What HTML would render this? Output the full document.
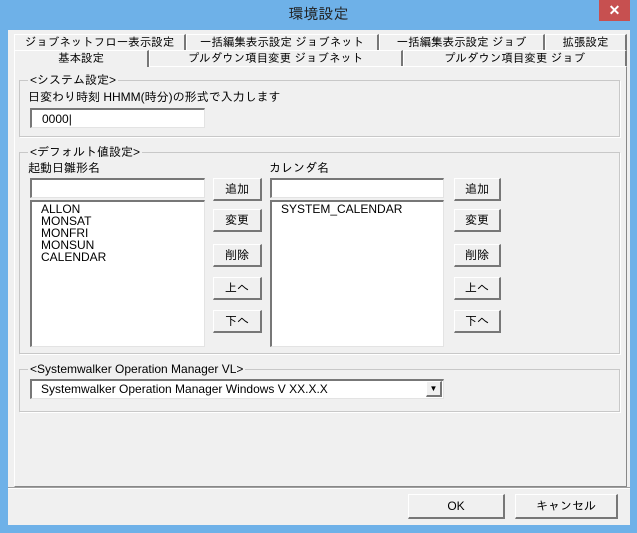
<!DOCTYPE html>
<html><head><meta charset="utf-8"><style>
*{margin:0;padding:0;box-sizing:border-box}
body{width:637px;height:533px;background:#6eb1e8;position:relative;overflow:hidden;font-family:"Liberation Sans","IPAGothic","Noto Sans CJK JP",sans-serif;font-size:12px;color:#000}
.a{position:absolute}
.client{left:8px;top:30px;width:622px;height:495px;background:#f0f0f0}
.title{left:0;top:6px;width:637px;text-align:center;font-size:15px;color:#222}
.close{left:599px;top:0;width:31px;height:21px;background:#c75050;color:#fff;text-align:center;font-size:14px;line-height:20px;font-weight:bold}
.tab{position:absolute;height:16px;line-height:16px;text-align:center;white-space:nowrap;border-right:2px solid #777;border-top:1px solid #fff;border-left:1px solid #fff;font-size:11.5px}
.page{left:14px;top:66px;width:613px;height:421px;border:1px solid #fff;border-right-color:#888;border-bottom-color:#888;background:#f0f0f0}
.grp{position:absolute;border:1px solid #c8c8c8;box-shadow:1px 1px 0 #fff}
.glab{position:absolute;background:#f0f0f0;padding:0 2px;top:-8px;left:8px;white-space:nowrap}
.in{position:absolute;background:#fff;border-top:2px solid #777;border-left:2px solid #777;border-right:1px solid #e3e3e3;border-bottom:1px solid #e3e3e3}
.btn{position:absolute;background:#f0f0f0;border:1px solid #fff;border-right:2px solid #777;border-bottom:2px solid #777;text-align:center}
</style></head><body>
<div class="a title">環境設定</div>
<div class="a close">✕</div>
<div class="a client"></div>

<div class="tab" style="left:14px;top:34px;width:172px">ジョブネットフロー表示設定</div>
<div class="tab" style="left:186px;top:34px;width:193px">一括編集表示設定 ジョブネット</div>
<div class="tab" style="left:379px;top:34px;width:166px">一括編集表示設定 ジョブ</div>
<div class="tab" style="left:545px;top:34px;width:82px">拡張設定</div>
<div class="tab" style="left:14px;top:50px;width:135px;height:17px;background:#f0f0f0;z-index:2">基本設定</div>
<div class="tab" style="left:149px;top:50px;width:254px">プルダウン項目変更 ジョブネット</div>
<div class="tab" style="left:403px;top:50px;width:224px">プルダウン項目変更 ジョブ</div>

<div class="a page"></div>

<div class="grp" style="left:19px;top:80px;width:601px;height:57px"><span class="glab">&lt;システム設定&gt;</span></div>
<div class="a" style="left:28px;top:90px">日変わり時刻 HHMM(時分)の形式で入力します</div>
<div class="in" style="left:30px;top:108px;width:175px;height:20px;padding:2px 0 0 10px">0000|</div>

<div class="grp" style="left:19px;top:152px;width:601px;height:202px"><span class="glab">&lt;デフォルト値設定&gt;</span></div>
<div class="a" style="left:28px;top:161px">起動日雛形名</div>
<div class="in" style="left:30px;top:178px;width:175px;height:20px"></div>
<div class="in" style="left:30px;top:200px;width:175px;height:147px;padding:1px 0 0 9px;line-height:12px">ALLON<br>MONSAT<br>MONFRI<br>MONSUN<br>CALENDAR</div>
<div class="btn" style="left:213px;top:178px;width:49px;height:23px;line-height:20px">追加</div>
<div class="btn" style="left:213px;top:209px;width:49px;height:23px;line-height:20px">変更</div>
<div class="btn" style="left:213px;top:244px;width:49px;height:23px;line-height:20px">削除</div>
<div class="btn" style="left:213px;top:277px;width:49px;height:23px;line-height:20px">上へ</div>
<div class="btn" style="left:213px;top:310px;width:49px;height:23px;line-height:20px">下へ</div>

<div class="a" style="left:269px;top:161px">カレンダ名</div>
<div class="in" style="left:270px;top:178px;width:174px;height:20px"></div>
<div class="in" style="left:270px;top:200px;width:174px;height:147px;padding:1px 0 0 9px;line-height:12px">SYSTEM_CALENDAR</div>
<div class="btn" style="left:454px;top:178px;width:47px;height:23px;line-height:20px">追加</div>
<div class="btn" style="left:454px;top:209px;width:47px;height:23px;line-height:20px">変更</div>
<div class="btn" style="left:454px;top:244px;width:47px;height:23px;line-height:20px">削除</div>
<div class="btn" style="left:454px;top:277px;width:47px;height:23px;line-height:20px">上へ</div>
<div class="btn" style="left:454px;top:310px;width:47px;height:23px;line-height:20px">下へ</div>

<div class="grp" style="left:19px;top:369px;width:601px;height:43px"><span class="glab">&lt;Systemwalker Operation Manager VL&gt;</span></div>
<div class="in" style="left:30px;top:379px;width:414px;height:20px;padding:1px 0 0 9px">Systemwalker Operation Manager Windows V XX.X.X</div>
<div class="btn" style="left:426px;top:381px;width:16px;height:16px;font-size:8px;line-height:14px">▼</div>

<div class="a" style="left:8px;top:487px;width:622px;height:2px;border-top:1px solid #a0a0a0;border-bottom:1px solid #fff"></div>
<div class="btn" style="left:408px;top:494px;width:97px;height:25px;line-height:22px">OK</div>
<div class="btn" style="left:515px;top:494px;width:103px;height:25px;line-height:22px">キャンセル</div>
</body></html>
